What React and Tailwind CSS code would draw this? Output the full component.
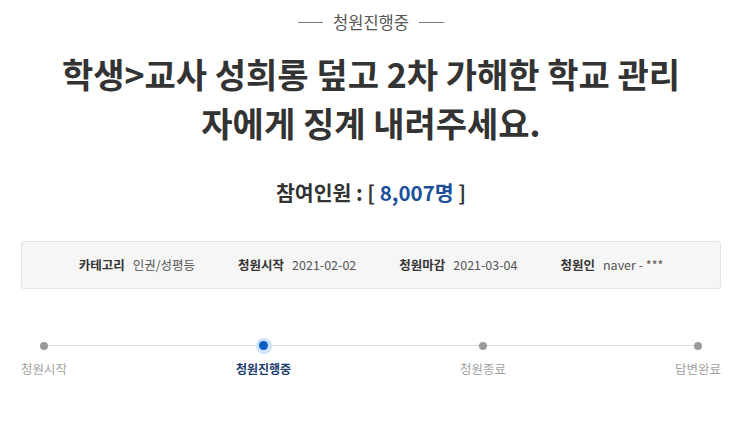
const steps = [
  { label: "청원시작", active: false },
  { label: "청원진행중", active: true },
  { label: "청원종료", active: false },
  { label: "답변완료", active: false },
];

const info = [
  { label: "카테고리", value: "인권/성평등" },
  { label: "청원시작", value: "2021-02-02" },
  { label: "청원마감", value: "2021-03-04" },
  { label: "청원인", value: "naver - ***" },
];

export default function App() {
  return (
    <div
      className="w-[745px] h-[439px] bg-white overflow-hidden"
      style={{ fontFamily: '"Noto Sans CJK KR", "Noto Sans", sans-serif' }}
    >
      <div className="w-[700px] ml-[21px]">
        {/* status badge */}
        <div className="flex items-center justify-center gap-[10px] pt-[10px] h-[34px]">
          <span className="w-[25px] h-px bg-[#777]" />
          <span className="text-[16.5px] leading-[24px] text-[#555]">청원진행중</span>
          <span className="w-[25px] h-px bg-[#777]" />
        </div>

        {/* title */}
        <h1 className="mt-[15px] text-center text-[34px] leading-[49px] font-bold text-[#333]">
          학생&gt;교사 성희롱 덮고 2차 가해한 학교 관리
          <br />
          자에게 징계 내려주세요.
        </h1>

        {/* count */}
        <div className="mt-[30px] text-center text-[20.5px] leading-[30px] font-bold text-[#333]">
          참여인원 : [ <span className="text-[#1b4f9c]">8,007명</span> ]
        </div>

        {/* info box */}
        <div className="mt-[34px] h-[48px] rounded-[3px] border border-[#e2e2e2] bg-[#f6f6f6] flex items-center justify-center gap-[43px] text-[12.5px] text-[#555]">
          {info.map((item) => (
            <div key={item.label} className="flex items-center gap-[8px]">
              <span className="font-bold text-[#333]">{item.label}</span>
              <span>{item.value}</span>
            </div>
          ))}
        </div>

        {/* progress */}
        <div className="relative mt-[49px]">
          <div className="absolute left-[23px] right-[23px] top-[7px] h-px bg-[#dcdcdc]" />
          <div className="relative flex justify-between">
            {steps.map((s) => (
              <div key={s.label} className="flex flex-col items-center">
                <div className="h-[15px] flex items-center justify-center">
                  {s.active ? (
                    <span className="w-[16px] h-[16px] rounded-full bg-[#cfe3fb] flex items-center justify-center">
                      <span className="w-[9px] h-[9px] rounded-full bg-[#0b5fc4]" />
                    </span>
                  ) : (
                    <span className="w-[8px] h-[8px] rounded-full bg-[#9a9a9a]" />
                  )}
                </div>
                <span
                  className={
                    s.active
                      ? "mt-[6px] text-[12px] leading-[20px] font-bold text-[#1c3d6e]"
                      : "mt-[6px] text-[12.5px] leading-[20px] text-[#a0a0a0]"
                  }
                >
                  {s.label}
                </span>
              </div>
            ))}
          </div>
        </div>
      </div>
    </div>
  );
}
